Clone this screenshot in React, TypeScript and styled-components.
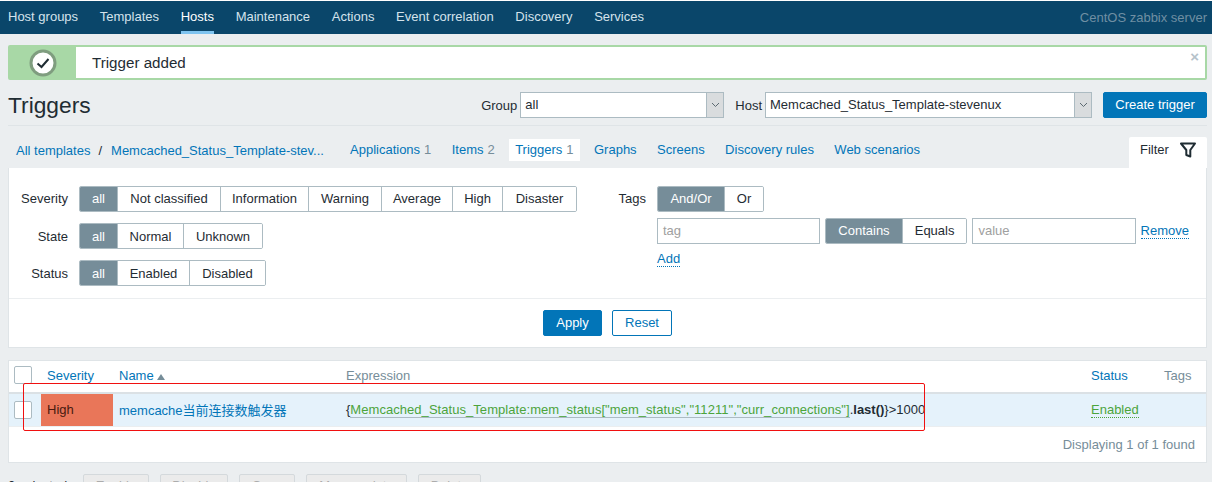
import React from "react";
import styled, { createGlobalStyle } from "styled-components";

const GlobalStyle = createGlobalStyle`
  html, body {
    margin: 0;
    height: 482px;
    overflow: hidden;
    background-color: #ebeef0;
    color: #1f2c33;
    font-family: "Liberation Sans", "Noto Sans CJK SC", sans-serif;
    font-size: 13px;
  }
  * { box-sizing: border-box; }
`;

const Page = styled.div`
  position: relative;
  width: 1212px;
  height: 482px;
  overflow: hidden;
`;

//top nav
const Nav = styled.nav`
  display: flex;
  align-items: stretch;
  height: 34px;
  padding: 0 5px 0 8px;
  gap: 21.7px;
  background-color: #0a466a;
  border-top: 1px solid #fff;
`;

const NavItem = styled.a<{ $active?: boolean }>`
  display: flex;
  align-items: center;
  height: 33px;
  padding-top: 1px;
  color: ${(p) => (p.$active ? "#fff" : "#d5e3ec")};
  border-bottom: 3px solid ${(p) => (p.$active ? "#7fc4f0" : "transparent")};
`;

const ServerName = styled.span`
  margin-left: auto;
  align-self: center;
  color: #6f8fa3;
`;

const Content = styled.main`
  padding: 11px 5px 0 8px;
`;

//message
const Message = styled.div`
  display: flex;
  height: 35px;
  border: 2px solid #a8d8a6;
  border-radius: 2px;
  background-color: #fff;
  position: relative;
`;

const MessageIcon = styled.div`
  display: flex;
  align-items: center;
  justify-content: center;
  width: 66px;
  background-color: #a8d8a6;
`;

const MessageText = styled.div`
  display: flex;
  align-items: center;
  padding-left: 16px;
  font-size: 15.17px;
  color: #1f2c33;
`;

const MessageClose = styled.span`
  position: absolute;
  top: 2px;
  right: 6px;
  color: #b5c2ca;
  font-size: 15px;
  font-weight: bold;
  line-height: 16px;
`;

//title row
const Header = styled.header`
  display: flex;
  align-items: center;
  height: 46px;
  margin-top: 0;
  padding-top: 5px;
  border-bottom: 1px solid #dfe4e7;
`;

const Title = styled.h1`
  margin: 0 auto 0 0;
  font-size: 22.75px;
  font-weight: normal;
  color: #1f2c33;
`;

const ControlLabel = styled.label`
  margin-right: 3px;
`;

const Select = styled.div<{ $width: number; $gap?: number }>`
  display: flex;
  width: ${(p) => p.$width}px;
  height: 26px;
  margin-right: ${(p) => p.$gap ?? 0}px;
  background-color: #fff;
  border: 1px solid #acbbc2;
`;

const SelectValue = styled.span`
  flex: 1;
  padding-left: 4px;
  line-height: 24px;
`;

const SelectArrow = styled.span`
  display: flex;
  align-items: center;
  justify-content: center;
  width: 17px;
  background-color: #d9dcde;
  border-left: 1px solid #acbbc2;
`;

const PrimaryButton = styled.button<{ $width?: number }>`
  width: ${(p) => p.$width ?? 104}px;
  height: 26px;
  padding: 0 0 2px;
  color: #fff;
  font: inherit;
  background-color: #0275b8;
  border: 1px solid #0275b8;
  border-radius: 2px;
`;

const OutlineButton = styled(PrimaryButton)`
  color: #0275b8;
  background-color: #fff;
`;

//tabs
const TabBar = styled.div`
  display: flex;
  align-items: flex-start;
  height: 42px;
  padding: 11px 0 0 8px;
`;

const Crumbs = styled.div`
  display: flex;
  align-items: center;
  width: 328px;
  height: 26px;
  color: #0275b8;
`;

const CrumbSlash = styled.span`
  margin: 0 9px 0 8px;
  color: #1f2c33;
`;

const Tab = styled.a<{ $active?: boolean }>`
  display: flex;
  align-items: center;
  gap: 4px;
  height: 22px;
  margin: 2px 8.4px 0 0;
  padding: 0 6px 2px;
  color: #0275b8;
  background-color: ${(p) => (p.$active ? "#fff" : "transparent")};
`;

const TabCount = styled.span`
  color: #768d99;
`;

const FilterTab = styled.div`
  display: flex;
  align-items: center;
  gap: 11px;
  width: 78px;
  height: 31px;
  margin-left: auto;
  padding: 0 11px 6px;
  background-color: #fff;
  border-radius: 2px 2px 0 0;
`;

//filter panel
const Panel = styled.section`
  background-color: #fff;
  border: 1px solid #dfe4e7;
  border-top: 0;
`;

const FilterBody = styled.div`
  display: flex;
  height: 130px;
  padding-top: 18px;
`;

const FilterColumn = styled.div<{ $width: number }>`
  display: flex;
  flex-direction: column;
  gap: 11px;
  width: ${(p) => p.$width}px;
`;

const FilterRow = styled.div`
  display: flex;
  align-items: center;
  height: 26px;
  &:nth-child(n + 2) span {
    padding-bottom: 0;
  }
`;

const FilterLabel = styled.span<{ $width: number }>`
  width: ${(p) => p.$width}px;
  margin-right: 11px;
  padding-bottom: 2px;
  text-align: right;
`;

const SegmentGroup = styled.div`
  display: flex;
  height: 26px;
  border: 1px solid #acbbc2;
  border-radius: 2px;
  overflow: hidden;
`;

const Segment = styled.span<{ $active?: boolean; $width: number }>`
  display: flex;
  align-items: center;
  justify-content: center;
  width: ${(p) => p.$width}px;
  padding-bottom: 2px;
  white-space: nowrap;
  color: ${(p) => (p.$active ? "#fff" : "#1f2c33")};
  background-color: ${(p) => (p.$active ? "#768d99" : "#fff")};
  border-right: 1px solid #acbbc2;
  &:last-child {
    border-right: 0;
  }
`;

const TagRow = styled.div`
  display: flex;
  align-items: center;
  gap: 5px;
  height: 26px;
  margin: -5px 0 0 48px;
`;

const TagInput = styled.span`
  display: flex;
  align-items: center;
  width: 164px;
  height: 26px;
  padding: 0 0 2px 5px;
  color: #a0a0a0;
  background-color: #fff;
  border: 1px solid #acbbc2;
`;

const DottedLink = styled.a<{ $color?: string }>`
  color: ${(p) => p.$color ?? "#0275b8"};
  border-bottom: 1px dotted ${(p) => p.$color ?? "#0275b8"};
`;

const AddRow = styled.div`
  margin: -4px 0 0 48px;
`;

const FilterActions = styled.div`
  display: flex;
  justify-content: center;
  gap: 10px;
  height: 49px;
  padding: 11px 0 0 0;
  border-top: 1px solid #ebeef0;
`;

//table
const TablePanel = styled.section`
  margin-top: 12px;
  height: 103px;
  background-color: #fff;
  border: 1px solid #dfe4e7;
`;

const Table = styled.table`
  width: 100%;
  table-layout: fixed;
  border-collapse: collapse;
`;

const HeadCell = styled.th<{ $width?: number; $color?: string }>`
  width: ${(p) => (p.$width ? `${p.$width}px` : "auto")};
  height: 32px;
  padding: 0 6px 3px;
  font-weight: normal;
  text-align: left;
  color: ${(p) => p.$color ?? "#0275b8"};
  border-bottom: 2px solid #dbe1e5;
`;

const Row = styled.tr`
  background-color: #e5f2fb;
  border-bottom: 1px solid #ebeef0;
`;

const Cell = styled.td`
  height: 33px;
  padding: 0 6px;
  white-space: nowrap;
`;

const SeverityCell = styled(Cell)`
  background-color: #e97659;
  color: #4a1a10;
`;

const Checkbox = styled.span`
  display: block;
  width: 18px;
  height: 18px;
  margin-left: -1px;
  background-color: #fff;
  border: 1px solid #acbbc2;
  border-radius: 2px;
`;

const SortArrow = styled.span`
  display: inline-block;
  margin-left: 3px;
  border-left: 4px solid transparent;
  border-right: 4px solid transparent;
  border-bottom: 6px solid #768d99;
`;

const NameLink = styled.a`
  color: #0275b8;
`;

const ExprLink = styled.a`
  color: #4ca43c;
  letter-spacing: 0.05px;
  border-bottom: 1px solid #acbbc2;
`;

const TableFooter = styled.div`
  padding: 10px 11px 0 0;
  text-align: right;
  color: #768d99;
`;

//bottom actions
const ActionBar = styled.div`
  display: flex;
  align-items: center;
  gap: 11px;
  margin-top: 11px;
  height: 24px;
`;

const SelectedCount = styled.span`
  width: 64px;
  padding-bottom: 2px;
  color: #1f2c33;
`;

const DisabledButton = styled.button<{ $width: number }>`
  width: ${(p) => p.$width}px;
  height: 24px;
  padding: 0 0 2px;
  color: #acacac;
  font: inherit;
  background-color: #ebebeb;
  border: 1px solid #d4d9dc;
  border-radius: 2px;
`;

const Annotation = styled.div`
  position: absolute;
  left: 23px;
  top: 383px;
  width: 902px;
  height: 48px;
  border: 1px solid #f01010;
  border-radius: 2px;
  pointer-events: none;
`;

const navItems = [
  "Host groups",
  "Templates",
  "Hosts",
  "Maintenance",
  "Actions",
  "Event correlation",
  "Discovery",
  "Services",
];

const tabs = [
  { label: "Applications", count: 1 },
  { label: "Items", count: 2 },
  { label: "Triggers", count: 1, active: true },
  { label: "Graphs" },
  { label: "Screens" },
  { label: "Discovery rules" },
  { label: "Web scenarios" },
];

const filterRows = [
  {
    label: "Severity",
    options: [
      { text: "all", width: 38, active: true },
      { text: "Not classified", width: 103 },
      { text: "Information", width: 88 },
      { text: "Warning", width: 73 },
      { text: "Average", width: 71 },
      { text: "High", width: 50 },
      { text: "Disaster", width: 73 },
    ],
  },
  {
    label: "State",
    options: [
      { text: "all", width: 38, active: true },
      { text: "Normal", width: 66 },
      { text: "Unknown", width: 78 },
    ],
  },
  {
    label: "Status",
    options: [
      { text: "all", width: 38, active: true },
      { text: "Enabled", width: 72 },
      { text: "Disabled", width: 75 },
    ],
  },
];

const actions = [
  { label: "Enable", width: 66 },
  { label: "Disable", width: 68 },
  { label: "Copy", width: 56 },
  { label: "Mass update", width: 101 },
  { label: "Delete", width: 63 },
];

const Chevron = () => (
  <svg width="9" height="6" viewBox="0 0 9 6">
    <path d="M1 1l3.5 3.5L8 1" fill="none" stroke="#5c6a72" strokeWidth="1" />
  </svg>
);

const CheckIcon = () => (
  <svg width="28" height="28" viewBox="0 0 28 28">
    <circle cx="14" cy="14" r="12" fill="#fff" stroke="#7f9d7f" strokeWidth="3" />
    <path d="M8.5 14.5l4 3.5 7-8" fill="none" stroke="#1f2c33" strokeWidth="2" />
  </svg>
);

const FunnelIcon = () => (
  <svg width="16" height="16" viewBox="0 0 16 16">
    <path
      d="M1 1.5h14L10.3 8v6.5l-4-1.5V8z"
      fill="none"
      stroke="#1f2c33"
      strokeWidth="2"
      strokeLinejoin="round"
    />
  </svg>
);

const App: React.FC = () => {
  return (
    <Page>
      <GlobalStyle />
      <Nav>
        {navItems.map((item) => (
          <NavItem key={item} $active={item === "Hosts"}>
            {item}
          </NavItem>
        ))}
        <ServerName>CentOS zabbix server</ServerName>
      </Nav>
      <Content>
        <Message>
          <MessageIcon>
            <CheckIcon />
          </MessageIcon>
          <MessageText>Trigger added</MessageText>
          <MessageClose>×</MessageClose>
        </Message>
        <Header>
          <Title>Triggers</Title>
          <ControlLabel>Group</ControlLabel>
          <Select $width={204} $gap={11}>
            <SelectValue>all</SelectValue>
            <SelectArrow>
              <Chevron />
            </SelectArrow>
          </Select>
          <ControlLabel>Host</ControlLabel>
          <Select $width={327} $gap={11}>
            <SelectValue>Memcached_Status_Template-stevenux</SelectValue>
            <SelectArrow>
              <Chevron />
            </SelectArrow>
          </Select>
          <PrimaryButton>Create trigger</PrimaryButton>
        </Header>
        <TabBar>
          <Crumbs>
            All templates
            <CrumbSlash>/</CrumbSlash>
            Memcached_Status_Template-stev...
          </Crumbs>
          {tabs.map((tab) => (
            <Tab key={tab.label} $active={tab.active}>
              {tab.label}
              {tab.count && <TabCount>{tab.count}</TabCount>}
            </Tab>
          ))}
          <FilterTab>
            Filter
            <FunnelIcon />
          </FilterTab>
        </TabBar>
        <Panel>
          <FilterBody>
            <FilterColumn $width={600}>
              {filterRows.map((row) => (
                <FilterRow key={row.label}>
                  <FilterLabel $width={59}>{row.label}</FilterLabel>
                  <SegmentGroup>
                    {row.options.map((option) => (
                      <Segment key={option.text} $active={option.active} $width={option.width}>
                        {option.text}
                      </Segment>
                    ))}
                  </SegmentGroup>
                </FilterRow>
              ))}
            </FilterColumn>
            <FilterColumn $width={580}>
              <FilterRow>
                <FilterLabel $width={37}>Tags</FilterLabel>
                <SegmentGroup>
                  <Segment $active $width={67}>
                    And/Or
                  </Segment>
                  <Segment $width={38}>Or</Segment>
                </SegmentGroup>
              </FilterRow>
              <TagRow>
                <TagInput>tag</TagInput>
                <SegmentGroup>
                  <Segment $active $width={77}>
                    Contains
                  </Segment>
                  <Segment $width={64}>Equals</Segment>
                </SegmentGroup>
                <TagInput>value</TagInput>
                <DottedLink>Remove</DottedLink>
              </TagRow>
              <AddRow>
                <DottedLink>Add</DottedLink>
              </AddRow>
            </FilterColumn>
          </FilterBody>
          <FilterActions>
            <PrimaryButton $width={59}>Apply</PrimaryButton>
            <OutlineButton $width={60}>Reset</OutlineButton>
          </FilterActions>
        </Panel>
        <TablePanel>
          <Table>
            <thead>
              <tr>
                <HeadCell $width={32}>
                  <Checkbox />
                </HeadCell>
                <HeadCell $width={72}>Severity</HeadCell>
                <HeadCell $width={227}>
                  Name
                  <SortArrow />
                </HeadCell>
                <HeadCell $color="#768d99">Expression</HeadCell>
                <HeadCell $width={73}>Status</HeadCell>
                <HeadCell $width={48} $color="#768d99">
                  Tags
                </HeadCell>
              </tr>
            </thead>
            <tbody>
              <Row>
                <Cell>
                  <Checkbox />
                </Cell>
                <SeverityCell>High</SeverityCell>
                <Cell>
                  <NameLink>memcache当前连接数触发器</NameLink>
                </Cell>
                <Cell>
                  {"{"}
                  <ExprLink>
                    Memcached_Status_Template:mem_status["mem_status","11211","curr_connections"]
                  </ExprLink>
                  .<b>last()</b>
                  {"}"}&gt;1000
                </Cell>
                <Cell>
                  <DottedLink $color="#4ca43c">Enabled</DottedLink>
                </Cell>
                <Cell />
              </Row>
            </tbody>
          </Table>
          <TableFooter>Displaying 1 of 1 found</TableFooter>
        </TablePanel>
        <ActionBar>
          <SelectedCount>0 selected</SelectedCount>
          {actions.map((action) => (
            <DisabledButton key={action.label} $width={action.width}>
              {action.label}
            </DisabledButton>
          ))}
        </ActionBar>
      </Content>
      <Annotation />
    </Page>
  );
};

export default App;
